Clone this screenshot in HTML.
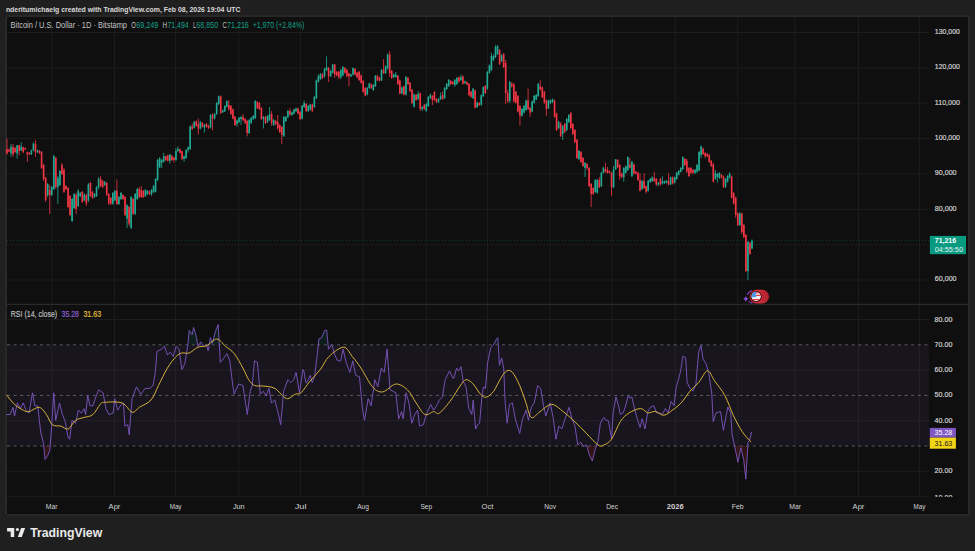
<!DOCTYPE html>
<html><head><meta charset="utf-8"><style>
html,body{margin:0;padding:0;}
body{width:975px;height:551px;background:#1f1f1f;position:relative;overflow:hidden;}
svg{position:absolute;left:0;top:0;font-family:"Liberation Sans", sans-serif;}
</style></head><body>
<svg width="975" height="551" viewBox="0 0 975 551">
<rect x="6" y="16" width="963" height="499" rx="3" fill="none" stroke="#282828" stroke-width="2.2"/>
<rect x="7" y="17" width="961" height="497" fill="#0f0f0f"/>
<line x1="51.7" y1="17" x2="51.7" y2="497" stroke="#1c1c1c" stroke-width="1"/>
<line x1="114.5" y1="17" x2="114.5" y2="497" stroke="#1c1c1c" stroke-width="1"/>
<line x1="175.6" y1="17" x2="175.6" y2="497" stroke="#1c1c1c" stroke-width="1"/>
<line x1="238.8" y1="17" x2="238.8" y2="497" stroke="#1c1c1c" stroke-width="1"/>
<line x1="300.6" y1="17" x2="300.6" y2="497" stroke="#1c1c1c" stroke-width="1"/>
<line x1="363.1" y1="17" x2="363.1" y2="497" stroke="#1c1c1c" stroke-width="1"/>
<line x1="426.3" y1="17" x2="426.3" y2="497" stroke="#1c1c1c" stroke-width="1"/>
<line x1="487.5" y1="17" x2="487.5" y2="497" stroke="#1c1c1c" stroke-width="1"/>
<line x1="550.1" y1="17" x2="550.1" y2="497" stroke="#1c1c1c" stroke-width="1"/>
<line x1="612.1" y1="17" x2="612.1" y2="497" stroke="#1c1c1c" stroke-width="1"/>
<line x1="675.3" y1="17" x2="675.3" y2="497" stroke="#1c1c1c" stroke-width="1"/>
<line x1="737.7" y1="17" x2="737.7" y2="497" stroke="#1c1c1c" stroke-width="1"/>
<line x1="795.1" y1="17" x2="795.1" y2="497" stroke="#1c1c1c" stroke-width="1"/>
<line x1="858.5" y1="17" x2="858.5" y2="497" stroke="#1c1c1c" stroke-width="1"/>
<line x1="919.4" y1="17" x2="919.4" y2="497" stroke="#1c1c1c" stroke-width="1"/>
<line x1="7" y1="280.0" x2="929" y2="280.0" stroke="#1c1c1c" stroke-width="1"/>
<line x1="7" y1="244.7" x2="929" y2="244.7" stroke="#1c1c1c" stroke-width="1"/>
<line x1="7" y1="209.3" x2="929" y2="209.3" stroke="#1c1c1c" stroke-width="1"/>
<line x1="7" y1="173.9" x2="929" y2="173.9" stroke="#1c1c1c" stroke-width="1"/>
<line x1="7" y1="138.6" x2="929" y2="138.6" stroke="#1c1c1c" stroke-width="1"/>
<line x1="7" y1="103.2" x2="929" y2="103.2" stroke="#1c1c1c" stroke-width="1"/>
<line x1="7" y1="67.9" x2="929" y2="67.9" stroke="#1c1c1c" stroke-width="1"/>
<line x1="7" y1="32.5" x2="929" y2="32.5" stroke="#1c1c1c" stroke-width="1"/>
<line x1="7" y1="319.5" x2="929" y2="319.5" stroke="#1c1c1c" stroke-width="1"/>
<line x1="7" y1="370.1" x2="929" y2="370.1" stroke="#1c1c1c" stroke-width="1"/>
<line x1="7" y1="420.7" x2="929" y2="420.7" stroke="#1c1c1c" stroke-width="1"/>
<line x1="7" y1="471.3" x2="929" y2="471.3" stroke="#1c1c1c" stroke-width="1"/>
<line x1="7" y1="496.6" x2="929" y2="496.6" stroke="#1c1c1c" stroke-width="1"/>
<rect x="7" y="344.8" width="922" height="101.2" fill="#7e57c2" fill-opacity="0.09"/>
<line x1="7" y1="344.8" x2="929" y2="344.8" stroke="#8a8a8a" stroke-opacity="0.6" stroke-width="1" stroke-dasharray="3 3.6"/>
<line x1="7" y1="395.4" x2="929" y2="395.4" stroke="#8a8a8a" stroke-opacity="0.6" stroke-width="1" stroke-dasharray="3 3.6"/>
<line x1="7" y1="446.0" x2="929" y2="446.0" stroke="#8a8a8a" stroke-opacity="0.6" stroke-width="1" stroke-dasharray="3 3.6"/>
<line x1="7" y1="304.3" x2="968" y2="304.3" stroke="#2a2a2a" stroke-width="1.2"/>
<line x1="7" y1="240.65" x2="929" y2="240.65" stroke="#089981" stroke-opacity="0.35" stroke-width="1" stroke-dasharray="1 2"/>
<path d="M11.04 144.00V156.80M17.15 145.00V158.70M21.22 142.20V151.00M31.40 149.50V155.00M33.43 142.50V151.00M37.50 149.50V153.00M47.68 183.00V197.00M51.75 186.00V196.00M53.79 155.00V190.00M57.86 176.00V204.00M59.90 170.00V186.00M72.11 198.00V222.00M74.15 193.00V209.00M78.22 189.00V207.00M80.25 192.00V197.00M84.32 193.00V201.00M88.39 183.00V202.00M94.50 193.00V198.00M96.54 186.00V197.00M98.57 177.00V189.00M104.68 181.00V186.00M112.82 192.00V205.00M114.86 190.00V201.00M118.93 196.00V205.00M120.96 192.00V200.00M127.07 204.00V228.00M131.14 196.00V229.00M135.21 193.00V215.00M137.25 188.00V200.00M145.39 189.00V197.00M147.43 190.00V195.00M151.50 189.00V195.50M153.53 185.00V193.00M155.57 178.00V192.50M157.60 159.00V181.00M159.64 157.30V168.00M161.68 159.00V168.00M163.71 153.00V162.50M169.82 154.00V163.50M175.93 148.00V161.00M177.96 146.30V152.00M184.07 155.50V161.70M186.10 149.20V159.00M188.14 146.50V152.70M190.17 125.50V150.00M194.25 121.00V128.50M200.35 120.80V129.50M204.42 124.00V132.60M210.53 114.00V128.50M214.60 113.00V119.50M216.64 102.00V115.00M218.67 95.50V105.00M222.74 109.50V113.00M224.78 105.00V112.00M226.82 100.40V107.50M236.99 119.50V126.70M239.03 117.00V123.00M241.06 116.00V125.00M249.21 119.00V134.00M251.24 117.00V124.00M253.28 115.00V120.00M255.31 100.00V119.00M263.46 116.00V128.40M267.53 115.00V123.00M269.56 107.00V121.00M273.63 119.00V126.00M283.81 116.00V137.00M285.85 116.00V122.00M287.88 110.00V118.00M291.95 111.50V116.00M293.99 109.00V114.50M296.03 107.50V112.00M302.13 105.00V119.50M304.17 100.70V108.00M308.24 105.00V112.00M310.27 104.00V110.60M314.35 96.00V108.00M316.38 79.50V99.00M318.42 74.00V82.50M320.45 73.00V80.00M324.52 68.00V77.50M326.56 56.30V71.00M330.63 70.00V77.00M332.67 64.00V73.50M340.81 69.00V79.00M342.84 66.00V76.30M350.99 73.60V77.00M353.02 67.50V75.50M367.27 87.00V95.40M369.31 82.70V89.00M373.38 84.00V91.00M375.41 75.00V87.00M381.52 69.00V81.00M385.59 65.50V74.00M387.63 53.50V69.50M393.73 73.50V78.00M395.77 72.00V77.80M401.88 86.50V94.30M405.95 76.00V95.50M414.09 93.60V107.50M418.16 91.00V100.00M422.23 106.00V111.00M426.30 103.00V112.00M428.34 96.00V107.00M430.38 93.40V99.00M438.52 98.00V103.00M440.55 92.50V100.00M444.62 87.00V99.00M446.66 83.00V90.00M448.70 79.00V87.00M454.80 79.00V87.00M456.84 77.00V85.00M460.91 74.50V81.00M464.98 80.50V84.00M473.12 88.00V99.00M477.19 101.70V108.00M481.27 94.40V105.70M483.30 86.40V97.00M487.37 71.00V89.70M489.41 64.50V73.60M491.44 52.70V71.00M493.48 54.50V61.00M495.51 45.20V58.00M497.55 45.00V55.00M501.62 54.00V62.00M509.76 81.00V103.00M521.98 108.00V116.70M524.01 105.00V113.40M526.05 99.60V111.00M532.16 100.70V112.30M534.19 95.00V103.60M536.23 94.00V100.30M538.26 83.00V97.00M548.44 99.60V109.00M550.48 99.60V104.00M552.51 98.50V103.00M558.62 121.00V129.00M562.69 125.00V140.00M566.76 118.00V131.00M568.80 114.00V123.00M578.97 150.00V160.00M585.08 162.00V177.00M595.26 179.00V193.00M597.29 179.00V194.00M601.37 172.00V187.00M603.40 166.80V173.50M613.58 165.90V188.00M615.61 159.00V170.00M623.76 167.00V181.80M625.79 165.50V173.50M627.83 156.50V171.00M631.90 161.00V177.00M642.08 180.00V190.00M648.18 180.00V191.50M650.22 178.00V183.00M652.26 176.50V182.00M658.36 182.00V186.30M662.43 176.30V184.50M664.47 180.50V184.00M666.50 180.00V183.50M670.58 176.50V185.00M674.65 176.50V183.50M676.68 172.00V180.00M678.72 170.00V175.50M680.75 167.00V172.50M682.79 156.30V170.00M695.00 169.00V174.00M697.04 164.00V173.00M699.07 151.00V171.00M701.11 145.50V158.00M715.36 170.00V180.00M717.39 173.00V182.50M719.43 172.00V179.00M725.54 178.00V188.00M727.57 175.00V182.50M729.61 172.30V178.50M739.79 212.00V226.00M747.93 241.00V280.00M752.00 239.50V249.00" stroke="#22ab94" stroke-width="0.8" fill="none"/>
<path d="M6.97 138.40V154.50M9.01 148.50V152.00M13.08 144.00V156.80M15.11 147.00V153.00M19.18 145.00V155.50M23.26 146.50V153.00M25.29 147.50V150.00M27.33 151.50V161.90M29.36 152.00V155.00M35.47 140.30V156.80M39.54 150.00V154.00M41.58 151.00V169.00M43.61 164.00V181.00M45.65 177.00V202.00M49.72 185.00V214.00M55.82 157.00V189.00M61.93 163.00V175.00M63.97 168.00V193.00M66.00 185.00V190.00M68.04 187.00V208.00M70.07 195.00V216.00M76.18 193.00V214.00M82.29 191.00V203.00M86.36 194.00V206.00M90.43 182.00V197.00M92.47 191.00V199.00M100.61 176.00V187.00M102.64 180.00V188.00M106.71 182.00V196.00M108.75 193.00V205.00M110.79 197.00V205.00M116.89 179.40V205.00M123.00 194.00V200.00M125.04 196.00V216.00M129.11 206.00V226.00M133.18 198.00V215.00M139.28 187.00V198.00M141.32 186.00V198.00M143.36 190.00V198.00M149.46 190.50V195.00M165.75 155.50V161.00M167.78 154.50V161.50M171.85 155.00V161.00M173.89 157.00V162.60M180.00 148.50V153.50M182.03 150.50V160.00M192.21 123.60V130.00M196.28 120.50V126.50M198.32 118.60V134.50M202.39 122.00V127.50M206.46 123.00V127.50M208.49 125.00V129.00M212.57 113.00V130.40M220.71 95.50V114.00M228.85 100.00V110.50M230.89 105.00V115.00M232.92 108.50V119.50M234.96 116.00V126.00M243.10 114.00V121.00M245.14 118.00V124.00M247.17 120.00V136.40M257.35 101.00V109.00M259.38 102.00V110.00M261.42 107.00V120.00M265.49 116.00V124.00M271.60 111.00V126.00M275.67 120.00V125.00M277.71 115.00V130.00M279.74 124.00V133.00M281.78 126.00V143.90M289.92 108.40V115.50M298.06 107.50V114.50M300.10 111.00V120.00M306.20 103.00V112.00M312.31 104.00V112.00M322.49 73.00V79.00M328.60 67.00V82.00M334.70 64.00V78.00M336.74 71.00V76.30M338.77 71.00V79.00M344.88 67.00V73.60M346.92 69.00V77.00M348.95 72.70V86.30M355.06 68.00V75.50M357.09 72.00V78.00M359.13 71.00V81.00M361.16 74.50V83.60M363.20 80.00V92.60M365.24 87.00V96.30M371.34 83.60V89.00M377.45 75.00V81.00M379.49 77.00V81.50M383.56 59.20V74.00M389.66 50.90V77.00M391.70 70.00V79.00M397.81 75.00V85.00M399.84 79.50V94.30M403.91 85.50V95.50M407.98 77.00V85.00M410.02 82.00V92.00M412.05 89.00V104.00M416.13 94.00V101.00M420.20 92.50V111.00M424.27 104.00V110.00M432.41 95.00V105.00M434.45 91.00V101.00M436.48 98.00V103.00M442.59 91.50V100.00M450.73 80.00V85.00M452.77 81.00V85.00M458.87 76.50V82.50M462.94 75.50V84.50M467.02 81.50V85.30M469.05 83.00V96.20M471.09 90.80V97.70M475.16 89.70V108.50M479.23 102.00V106.00M485.34 85.00V94.00M499.59 49.00V65.00M503.66 53.00V68.00M505.69 60.00V103.90M507.73 90.00V103.00M511.80 82.00V88.00M513.83 83.00V102.50M515.87 91.00V103.60M517.91 95.00V112.30M519.94 105.00V125.50M528.08 88.50V110.00M530.12 107.00V117.00M540.30 80.30V90.50M542.33 86.50V98.00M544.37 91.00V103.60M546.40 99.60V115.80M554.55 99.60V117.70M556.58 112.70V131.00M560.65 122.00V137.00M564.72 123.00V133.00M570.83 112.00V129.00M572.87 123.00V135.00M574.90 129.00V143.00M576.94 139.00V159.00M581.01 151.00V163.00M583.05 157.00V167.00M587.12 163.00V170.00M589.15 167.00V187.00M591.19 183.00V207.00M593.22 187.00V195.00M599.33 177.20V188.00M605.44 162.70V172.50M607.47 166.80V173.50M609.51 170.50V173.50M611.54 172.00V195.80M617.65 159.00V168.00M619.69 164.00V180.00M621.72 172.70V178.00M629.86 158.20V168.50M633.94 163.50V174.50M635.97 171.00V174.50M638.01 172.00V181.00M640.04 173.60V191.50M644.11 173.20V189.00M646.15 185.50V193.50M654.29 171.80V182.00M656.33 178.00V186.00M660.40 178.00V185.50M668.54 173.20V185.50M672.61 176.50V184.50M684.83 158.00V166.00M686.86 159.00V173.00M688.90 167.00V177.00M690.93 167.00V174.00M692.97 169.00V174.00M703.15 147.50V155.00M705.18 152.00V158.00M707.22 153.00V157.00M709.25 154.00V163.00M711.29 160.00V167.00M713.32 163.00V182.50M721.47 174.00V178.50M723.50 175.50V188.00M731.64 175.50V198.50M733.68 192.00V204.50M735.72 196.50V218.00M737.75 212.50V226.00M741.82 212.50V234.00M743.86 224.00V238.00M745.89 234.00V272.00M749.96 242.00V255.00" stroke="#f23645" stroke-width="0.8" fill="none"/>
<path d="M10.24 146.60h1.6v7.00h-1.6zM16.35 145.30h1.6v8.30h-1.6zM20.42 146.60h1.6v3.80h-1.6zM30.60 150.40h1.6v3.80h-1.6zM32.63 143.40h1.6v7.00h-1.6zM36.70 150.40h1.6v1.90h-1.6zM46.88 184.00h1.6v11.00h-1.6zM50.95 187.00h1.6v8.00h-1.6zM52.99 156.00h1.6v33.00h-1.6zM57.06 178.00h1.6v9.00h-1.6zM59.10 171.00h1.6v14.00h-1.6zM71.31 199.00h1.6v22.00h-1.6zM73.35 194.00h1.6v14.00h-1.6zM77.42 191.00h1.6v15.00h-1.6zM79.45 193.00h1.6v3.00h-1.6zM83.52 194.80h1.6v5.80h-1.6zM87.59 184.60h1.6v16.00h-1.6zM93.70 194.00h1.6v3.00h-1.6zM95.74 187.50h1.6v8.50h-1.6zM97.77 178.80h1.6v8.70h-1.6zM103.88 182.00h1.6v3.00h-1.6zM112.02 193.00h1.6v10.50h-1.6zM114.06 190.80h1.6v9.80h-1.6zM118.13 197.00h1.6v7.00h-1.6zM120.16 193.00h1.6v6.00h-1.6zM126.27 205.50h1.6v13.10h-1.6zM130.34 197.00h1.6v31.00h-1.6zM134.41 194.00h1.6v19.70h-1.6zM136.45 189.00h1.6v10.00h-1.6zM144.59 190.00h1.6v6.00h-1.6zM146.63 191.00h1.6v3.00h-1.6zM150.70 190.00h1.6v4.50h-1.6zM152.73 186.00h1.6v6.00h-1.6zM154.77 179.00h1.6v12.80h-1.6zM156.80 160.00h1.6v20.00h-1.6zM158.84 158.20h1.6v9.10h-1.6zM160.88 160.00h1.6v2.70h-1.6zM162.91 156.30h1.6v5.40h-1.6zM169.02 154.50h1.6v6.30h-1.6zM175.13 150.90h1.6v9.10h-1.6zM177.16 149.00h1.6v1.90h-1.6zM183.27 156.30h1.6v2.70h-1.6zM185.30 150.00h1.6v8.00h-1.6zM187.34 147.20h1.6v2.80h-1.6zM189.37 126.40h1.6v22.60h-1.6zM193.45 121.80h1.6v5.90h-1.6zM199.55 122.20h1.6v6.40h-1.6zM203.62 125.00h1.6v2.60h-1.6zM209.73 115.00h1.6v12.60h-1.6zM213.80 114.00h1.6v4.60h-1.6zM215.84 103.00h1.6v11.00h-1.6zM217.87 96.30h1.6v7.70h-1.6zM221.94 110.40h1.6v1.80h-1.6zM223.98 106.00h1.6v5.30h-1.6zM226.02 101.30h1.6v5.50h-1.6zM236.19 120.40h1.6v3.60h-1.6zM238.23 117.80h1.6v4.20h-1.6zM240.26 117.00h1.6v2.00h-1.6zM248.41 120.00h1.6v13.00h-1.6zM250.44 118.00h1.6v5.00h-1.6zM252.48 116.00h1.6v3.00h-1.6zM254.51 101.00h1.6v17.00h-1.6zM262.66 117.00h1.6v2.00h-1.6zM266.73 116.00h1.6v6.00h-1.6zM268.76 114.00h1.6v6.00h-1.6zM272.83 120.00h1.6v5.00h-1.6zM283.01 117.00h1.6v19.00h-1.6zM285.05 117.00h1.6v4.00h-1.6zM287.08 111.00h1.6v6.30h-1.6zM291.15 112.20h1.6v2.50h-1.6zM293.19 109.60h1.6v3.90h-1.6zM295.23 108.40h1.6v2.60h-1.6zM301.33 105.80h1.6v12.70h-1.6zM303.37 103.00h1.6v4.00h-1.6zM307.44 105.80h1.6v5.20h-1.6zM309.47 104.60h1.6v5.00h-1.6zM313.55 97.00h1.6v10.00h-1.6zM315.58 80.40h1.6v17.60h-1.6zM317.62 76.00h1.6v5.70h-1.6zM319.65 74.50h1.6v4.50h-1.6zM323.72 69.00h1.6v7.60h-1.6zM325.76 67.00h1.6v3.20h-1.6zM329.83 71.00h1.6v5.30h-1.6zM331.87 64.50h1.6v8.20h-1.6zM340.01 70.00h1.6v7.20h-1.6zM342.04 67.00h1.6v8.40h-1.6zM350.19 74.50h1.6v1.80h-1.6zM352.22 68.00h1.6v6.50h-1.6zM366.47 88.00h1.6v6.50h-1.6zM368.51 83.60h1.6v4.40h-1.6zM372.58 85.00h1.6v5.00h-1.6zM374.61 75.70h1.6v10.60h-1.6zM380.72 69.80h1.6v10.60h-1.6zM384.79 66.30h1.6v7.00h-1.6zM386.83 54.40h1.6v14.20h-1.6zM392.93 74.50h1.6v2.50h-1.6zM394.97 74.50h1.6v2.40h-1.6zM401.08 87.50h1.6v5.90h-1.6zM405.15 77.00h1.6v17.60h-1.6zM413.29 94.60h1.6v11.80h-1.6zM417.36 94.00h1.6v5.00h-1.6zM421.43 107.00h1.6v2.00h-1.6zM425.50 104.00h1.6v7.00h-1.6zM427.54 97.00h1.6v9.00h-1.6zM429.58 95.00h1.6v3.00h-1.6zM437.72 99.00h1.6v3.00h-1.6zM439.75 96.00h1.6v3.00h-1.6zM443.82 88.00h1.6v10.00h-1.6zM445.86 84.00h1.6v5.00h-1.6zM447.90 80.00h1.6v6.00h-1.6zM454.00 80.00h1.6v5.00h-1.6zM456.04 78.00h1.6v6.00h-1.6zM460.11 77.20h1.6v2.80h-1.6zM464.18 81.50h1.6v1.50h-1.6zM472.32 88.80h1.6v9.40h-1.6zM476.39 102.60h1.6v4.40h-1.6zM480.47 95.30h1.6v9.50h-1.6zM482.50 87.30h1.6v8.70h-1.6zM486.57 72.00h1.6v16.80h-1.6zM488.61 65.40h1.6v7.30h-1.6zM490.64 56.00h1.6v14.00h-1.6zM492.68 56.00h1.6v4.00h-1.6zM494.71 47.00h1.6v10.00h-1.6zM496.75 46.00h1.6v8.00h-1.6zM500.82 55.50h1.6v5.50h-1.6zM508.96 82.00h1.6v19.00h-1.6zM521.18 109.00h1.6v6.80h-1.6zM523.21 106.00h1.6v6.50h-1.6zM525.25 100.50h1.6v9.50h-1.6zM531.36 101.60h1.6v9.80h-1.6zM533.39 96.00h1.6v6.70h-1.6zM535.43 95.00h1.6v4.40h-1.6zM537.46 84.00h1.6v12.00h-1.6zM547.64 100.50h1.6v7.50h-1.6zM549.68 100.50h1.6v2.50h-1.6zM551.71 99.40h1.6v2.60h-1.6zM557.82 122.00h1.6v6.00h-1.6zM561.89 126.00h1.6v8.00h-1.6zM565.96 119.00h1.6v11.00h-1.6zM568.00 115.00h1.6v7.00h-1.6zM578.17 151.00h1.6v8.00h-1.6zM584.28 163.00h1.6v5.00h-1.6zM594.46 180.00h1.6v12.00h-1.6zM596.49 180.00h1.6v12.60h-1.6zM600.57 172.70h1.6v13.60h-1.6zM602.60 167.70h1.6v5.00h-1.6zM612.78 169.50h1.6v17.70h-1.6zM614.81 159.50h1.6v10.00h-1.6zM622.96 168.00h1.6v9.20h-1.6zM624.99 166.30h1.6v6.40h-1.6zM627.03 157.00h1.6v13.00h-1.6zM631.10 161.80h1.6v14.50h-1.6zM641.28 180.90h1.6v8.10h-1.6zM647.38 180.90h1.6v9.90h-1.6zM649.42 179.00h1.6v3.00h-1.6zM651.46 177.20h1.6v3.70h-1.6zM657.56 182.70h1.6v1.80h-1.6zM661.63 180.90h1.6v2.70h-1.6zM663.67 181.30h1.6v1.70h-1.6zM665.70 181.00h1.6v1.70h-1.6zM669.78 177.20h1.6v7.30h-1.6zM673.85 177.20h1.6v5.50h-1.6zM675.88 172.70h1.6v6.30h-1.6zM677.92 170.90h1.6v3.60h-1.6zM679.95 168.00h1.6v3.80h-1.6zM681.99 157.30h1.6v11.70h-1.6zM694.20 170.00h1.6v2.70h-1.6zM696.24 165.00h1.6v6.60h-1.6zM698.27 152.00h1.6v18.50h-1.6zM700.31 146.50h1.6v8.80h-1.6zM714.56 173.00h1.6v5.80h-1.6zM716.59 174.00h1.6v3.00h-1.6zM718.63 173.00h1.6v5.00h-1.6zM724.74 178.80h1.6v8.00h-1.6zM726.77 176.00h1.6v5.70h-1.6zM728.81 173.80h1.6v3.60h-1.6zM738.99 213.60h1.6v11.40h-1.6zM747.13 242.00h1.6v29.00h-1.6zM751.20 240.65h1.6v7.95h-1.6z" fill="#22ab94"/>
<path d="M6.17 149.00h1.6v4.60h-1.6zM8.21 149.80h1.6v1.70h-1.6zM12.28 147.20h1.6v7.00h-1.6zM14.31 148.00h1.6v4.00h-1.6zM18.38 145.30h1.6v5.70h-1.6zM22.46 147.20h1.6v5.10h-1.6zM24.49 148.00h1.6v1.50h-1.6zM26.53 152.30h1.6v1.90h-1.6zM28.56 152.80h1.6v1.40h-1.6zM34.67 144.00h1.6v8.30h-1.6zM38.74 151.00h1.6v2.00h-1.6zM40.78 152.00h1.6v16.00h-1.6zM42.81 165.00h1.6v14.00h-1.6zM44.85 178.00h1.6v22.00h-1.6zM48.92 190.00h1.6v5.00h-1.6zM55.02 158.00h1.6v29.00h-1.6zM61.13 165.00h1.6v9.00h-1.6zM63.17 170.00h1.6v22.00h-1.6zM65.20 186.00h1.6v3.00h-1.6zM67.24 188.00h1.6v19.00h-1.6zM69.27 196.00h1.6v19.00h-1.6zM75.38 195.00h1.6v14.00h-1.6zM81.49 192.00h1.6v10.00h-1.6zM85.56 195.00h1.6v8.50h-1.6zM89.63 183.00h1.6v13.00h-1.6zM91.67 192.00h1.6v5.70h-1.6zM99.81 178.80h1.6v7.20h-1.6zM101.84 181.00h1.6v6.00h-1.6zM105.91 183.00h1.6v11.80h-1.6zM107.95 194.00h1.6v9.50h-1.6zM109.99 198.00h1.6v5.50h-1.6zM116.09 190.80h1.6v13.20h-1.6zM122.20 195.00h1.6v4.00h-1.6zM124.24 197.00h1.6v18.00h-1.6zM128.31 207.00h1.6v16.50h-1.6zM132.38 199.00h1.6v14.70h-1.6zM138.48 189.00h1.6v8.00h-1.6zM140.52 190.00h1.6v7.00h-1.6zM142.56 191.00h1.6v6.00h-1.6zM148.66 191.40h1.6v2.60h-1.6zM164.95 156.30h1.6v3.70h-1.6zM166.98 155.40h1.6v5.40h-1.6zM171.05 155.80h1.6v4.20h-1.6zM173.09 157.50h1.6v2.50h-1.6zM179.20 149.50h1.6v3.20h-1.6zM181.23 151.30h1.6v7.70h-1.6zM191.41 126.40h1.6v2.60h-1.6zM195.48 121.30h1.6v4.50h-1.6zM197.52 124.00h1.6v4.60h-1.6zM201.59 123.00h1.6v3.70h-1.6zM205.66 124.00h1.6v2.70h-1.6zM207.69 125.80h1.6v2.30h-1.6zM211.77 115.00h1.6v3.60h-1.6zM219.91 96.30h1.6v16.70h-1.6zM228.05 105.00h1.6v4.50h-1.6zM230.09 106.00h1.6v8.00h-1.6zM232.12 109.50h1.6v9.10h-1.6zM234.16 116.80h1.6v8.20h-1.6zM242.30 117.00h1.6v3.00h-1.6zM244.34 119.00h1.6v4.00h-1.6zM246.37 121.00h1.6v12.00h-1.6zM256.55 102.00h1.6v6.00h-1.6zM258.58 103.00h1.6v6.00h-1.6zM260.62 108.00h1.6v11.00h-1.6zM264.69 117.00h1.6v6.00h-1.6zM270.80 114.00h1.6v9.00h-1.6zM274.87 121.00h1.6v3.00h-1.6zM276.91 122.00h1.6v6.00h-1.6zM278.94 125.00h1.6v7.00h-1.6zM280.98 127.00h1.6v8.00h-1.6zM289.12 111.00h1.6v3.70h-1.6zM297.26 108.40h1.6v5.10h-1.6zM299.30 112.00h1.6v7.00h-1.6zM305.40 104.00h1.6v7.00h-1.6zM311.51 104.60h1.6v6.40h-1.6zM321.69 74.00h1.6v3.90h-1.6zM327.80 68.00h1.6v8.30h-1.6zM333.90 64.50h1.6v10.00h-1.6zM335.94 71.80h1.6v3.60h-1.6zM337.97 71.80h1.6v5.40h-1.6zM344.08 68.00h1.6v4.70h-1.6zM346.12 70.00h1.6v6.30h-1.6zM348.15 73.60h1.6v2.70h-1.6zM354.26 69.00h1.6v5.50h-1.6zM356.29 72.70h1.6v4.50h-1.6zM358.33 71.80h1.6v8.20h-1.6zM360.36 75.40h1.6v7.30h-1.6zM362.40 80.90h1.6v10.80h-1.6zM364.44 88.00h1.6v7.40h-1.6zM370.54 84.50h1.6v3.50h-1.6zM376.65 75.70h1.6v4.70h-1.6zM378.69 77.80h1.6v2.60h-1.6zM382.76 69.80h1.6v3.50h-1.6zM388.86 54.40h1.6v18.90h-1.6zM390.90 71.00h1.6v7.00h-1.6zM397.01 75.70h1.6v8.30h-1.6zM399.04 80.40h1.6v13.00h-1.6zM403.11 86.30h1.6v8.30h-1.6zM407.18 78.00h1.6v6.00h-1.6zM409.22 82.80h1.6v8.20h-1.6zM411.25 90.00h1.6v12.90h-1.6zM415.33 95.00h1.6v5.00h-1.6zM419.40 93.40h1.6v15.60h-1.6zM423.47 105.00h1.6v4.00h-1.6zM431.61 96.00h1.6v4.00h-1.6zM433.65 92.00h1.6v8.00h-1.6zM435.68 99.00h1.6v3.00h-1.6zM441.79 95.00h1.6v4.00h-1.6zM449.93 81.00h1.6v3.00h-1.6zM451.97 82.00h1.6v2.00h-1.6zM458.07 77.20h1.6v4.50h-1.6zM462.14 76.50h1.6v7.20h-1.6zM466.22 82.30h1.6v2.10h-1.6zM468.25 84.00h1.6v11.30h-1.6zM470.29 91.70h1.6v5.10h-1.6zM474.36 90.60h1.6v17.10h-1.6zM478.43 103.00h1.6v2.00h-1.6zM484.54 85.90h1.6v7.10h-1.6zM498.79 50.00h1.6v14.00h-1.6zM502.86 54.00h1.6v13.00h-1.6zM504.89 63.00h1.6v30.00h-1.6zM506.93 93.00h1.6v8.00h-1.6zM511.00 84.00h1.6v2.00h-1.6zM513.03 84.40h1.6v17.20h-1.6zM515.07 91.80h1.6v10.90h-1.6zM517.11 96.00h1.6v15.40h-1.6zM519.14 106.00h1.6v9.80h-1.6zM527.28 100.50h1.6v8.50h-1.6zM529.32 108.00h1.6v4.50h-1.6zM539.50 86.30h1.6v3.30h-1.6zM541.53 87.40h1.6v9.80h-1.6zM543.57 91.80h1.6v10.90h-1.6zM545.60 100.50h1.6v8.50h-1.6zM553.75 100.50h1.6v16.30h-1.6zM555.78 113.60h1.6v16.40h-1.6zM559.85 124.00h1.6v12.00h-1.6zM563.92 124.00h1.6v8.00h-1.6zM570.03 113.00h1.6v15.00h-1.6zM572.07 124.00h1.6v10.00h-1.6zM574.10 130.00h1.6v12.00h-1.6zM576.14 140.00h1.6v18.00h-1.6zM580.21 152.00h1.6v10.00h-1.6zM582.25 158.00h1.6v8.00h-1.6zM586.32 164.00h1.6v4.00h-1.6zM588.35 168.00h1.6v18.00h-1.6zM590.39 184.00h1.6v10.00h-1.6zM592.42 188.00h1.6v6.00h-1.6zM598.53 180.00h1.6v7.20h-1.6zM604.64 169.00h1.6v2.80h-1.6zM606.67 170.00h1.6v2.70h-1.6zM608.71 171.30h1.6v1.40h-1.6zM610.74 172.70h1.6v14.50h-1.6zM616.85 160.00h1.6v7.20h-1.6zM618.89 165.00h1.6v11.30h-1.6zM620.92 173.60h1.6v3.60h-1.6zM629.06 164.50h1.6v3.20h-1.6zM633.14 164.50h1.6v9.10h-1.6zM635.17 171.80h1.6v1.80h-1.6zM637.21 172.70h1.6v7.30h-1.6zM639.24 180.00h1.6v10.80h-1.6zM643.31 180.90h1.6v7.10h-1.6zM645.35 186.30h1.6v5.40h-1.6zM653.49 178.00h1.6v2.90h-1.6zM655.53 179.00h1.6v5.50h-1.6zM659.60 179.00h1.6v5.50h-1.6zM667.74 180.90h1.6v3.60h-1.6zM671.81 177.20h1.6v6.40h-1.6zM684.03 159.00h1.6v6.00h-1.6zM686.06 160.70h1.6v10.90h-1.6zM688.10 168.00h1.6v8.00h-1.6zM690.13 168.00h1.6v4.70h-1.6zM692.17 170.00h1.6v2.70h-1.6zM702.35 148.70h1.6v5.30h-1.6zM704.38 153.00h1.6v3.30h-1.6zM706.42 154.00h1.6v2.30h-1.6zM708.45 155.30h1.6v6.50h-1.6zM710.49 160.70h1.6v5.30h-1.6zM712.52 164.30h1.6v17.40h-1.6zM720.67 175.00h1.6v2.40h-1.6zM722.70 176.70h1.6v10.10h-1.6zM730.84 176.70h1.6v21.00h-1.6zM732.88 193.00h1.6v10.50h-1.6zM734.92 197.70h1.6v17.30h-1.6zM736.95 213.60h1.6v11.40h-1.6zM741.02 213.60h1.6v18.40h-1.6zM743.06 225.00h1.6v12.00h-1.6zM745.09 235.00h1.6v36.00h-1.6zM749.16 243.00h1.6v11.00h-1.6z" fill="#f23645"/>
<clipPath id="ob"><rect x="0" y="0" width="975" height="344.80"/></clipPath>
<clipPath id="os"><rect x="0" y="446.00" width="975" height="100"/></clipPath>
<polygon points="6.4,344.8 6.4,414.5 10.2,414.5 13.1,407.3 14.5,416.0 17.4,402.9 20.3,408.7 23.2,402.9 26.1,410.2 29.0,413.1 32.5,392.8 34.8,405.8 37.7,405.8 40.7,432.0 43.6,443.6 45.0,459.5 47.9,455.2 49.9,449.4 51.7,426.1 53.7,392.8 55.7,420.3 59.5,402.9 62.4,414.5 65.3,421.8 68.2,437.8 69.7,439.2 72.0,420.3 75.5,423.2 78.4,410.2 81.3,413.1 84.2,408.7 85.7,414.5 87.7,395.7 90.0,405.8 92.9,405.8 95.8,397.1 98.7,389.8 103.1,392.8 106.0,408.7 108.9,414.5 113.2,413.1 114.7,398.6 117.6,410.2 120.5,405.8 123.4,402.9 124.9,426.1 127.8,424.7 129.2,434.9 132.1,398.6 136.5,386.9 140.8,394.2 145.2,388.4 149.8,388.4 153.1,385.5 155.3,372.4 157.0,351.4 161.6,349.2 164.5,346.3 167.4,355.0 170.3,352.1 173.2,356.5 176.1,346.3 179.0,349.2 181.9,369.5 184.8,363.7 187.7,346.3 189.2,330.3 192.1,334.7 193.6,327.4 196.5,337.6 197.9,346.3 200.8,341.9 203.7,346.3 206.6,344.8 208.1,350.7 210.4,337.6 212.4,343.4 215.3,331.8 218.2,324.5 220.3,362.3 224.0,357.9 226.9,353.6 229.8,360.8 232.8,385.5 234.2,394.2 238.6,384.0 242.9,385.5 247.3,414.5 250.2,391.3 252.2,385.5 254.5,360.8 257.4,362.3 260.3,394.2 263.2,391.3 266.1,395.7 269.0,388.4 271.4,402.9 274.9,400.0 277.8,411.6 280.7,424.7 283.6,391.3 287.9,379.7 290.8,382.6 293.7,379.7 296.1,372.4 299.5,392.8 302.9,369.5 303.9,371.0 305.8,382.6 306.8,382.6 310.2,375.3 312.2,382.6 314.5,376.8 317.4,353.6 318.9,339.0 321.8,337.6 324.7,330.3 326.7,330.3 328.5,349.2 331.9,344.8 334.8,355.0 337.7,360.8 340.7,360.8 343.0,349.2 346.5,363.7 349.9,372.4 352.8,360.8 355.7,375.3 359.5,376.8 362.4,408.7 364.5,420.3 368.2,398.6 371.1,405.8 374.9,379.7 377.8,386.9 381.3,368.1 384.2,372.4 387.1,349.2 390.0,389.8 395.8,392.8 398.7,418.9 401.6,411.6 403.1,418.9 406.0,392.8 408.9,402.9 411.8,423.2 414.7,414.5 417.6,410.2 419.6,426.1 423.4,424.7 426.3,414.5 430.7,404.4 433.6,410.2 436.5,405.8 439.4,400.0 442.3,397.1 445.2,379.7 449.5,371.0 452.9,378.2 453.9,378.2 456.6,368.1 458.7,371.0 461.0,366.6 463.1,381.1 466.0,386.9 468.9,408.7 471.8,414.5 473.2,400.0 475.6,429.0 477.6,424.7 479.6,423.2 481.9,397.1 483.4,386.9 485.4,388.4 487.7,362.3 490.7,347.7 493.6,344.8 496.5,339.0 497.9,337.6 499.4,365.2 501.7,357.9 503.7,368.1 505.2,402.9 507.2,423.2 509.5,404.4 512.4,402.9 515.3,418.9 519.7,433.4 522.6,418.9 526.1,410.2 528.4,420.3 531.3,407.3 534.2,402.9 537.7,385.5 540.6,388.4 543.5,405.8 545.8,416.0 550.2,402.9 553.1,417.4 556.0,439.2 558.9,426.1 561.8,429.0 564.1,421.8 567.0,413.1 569.0,407.3 572.0,418.9 574.9,426.1 577.8,445.0 580.7,442.1 583.6,446.5 586.5,445.0 589.4,455.2 592.3,461.0 595.2,449.4 598.1,440.7 600.4,423.2 602.9,418.7 603.9,417.4 605.8,420.2 608.5,421.0 611.6,439.0 613.1,412.9 616.0,396.9 618.9,407.1 620.3,414.4 623.2,412.9 626.1,404.2 628.2,395.5 629.9,398.4 631.9,396.9 634.8,410.0 637.7,420.2 640.1,427.4 642.1,418.7 645.0,428.9 647.9,411.5 650.8,407.1 653.7,405.7 656.6,412.9 659.5,412.9 662.4,414.4 665.3,408.6 668.2,412.9 671.1,401.3 674.0,405.7 676.1,388.2 678.4,379.5 680.7,370.8 682.8,356.3 685.7,357.7 687.1,382.4 690.0,388.2 692.9,391.1 695.8,385.3 698.7,351.9 701.0,345.6 703.1,359.2 706.0,363.6 708.9,373.7 711.8,394.0 713.2,421.6 716.1,412.9 720.5,411.5 723.4,430.3 727.8,407.1 730.7,412.9 732.1,434.7 735.0,447.8 737.9,462.3 740.8,447.8 743.7,459.4 745.8,479.1 748.1,442.0 749.5,440.5 751.6,431.8 751.6,344.8" fill="#089981" fill-opacity="0.12" clip-path="url(#ob)"/>
<polygon points="6.4,446.0 6.4,414.5 10.2,414.5 13.1,407.3 14.5,416.0 17.4,402.9 20.3,408.7 23.2,402.9 26.1,410.2 29.0,413.1 32.5,392.8 34.8,405.8 37.7,405.8 40.7,432.0 43.6,443.6 45.0,459.5 47.9,455.2 49.9,449.4 51.7,426.1 53.7,392.8 55.7,420.3 59.5,402.9 62.4,414.5 65.3,421.8 68.2,437.8 69.7,439.2 72.0,420.3 75.5,423.2 78.4,410.2 81.3,413.1 84.2,408.7 85.7,414.5 87.7,395.7 90.0,405.8 92.9,405.8 95.8,397.1 98.7,389.8 103.1,392.8 106.0,408.7 108.9,414.5 113.2,413.1 114.7,398.6 117.6,410.2 120.5,405.8 123.4,402.9 124.9,426.1 127.8,424.7 129.2,434.9 132.1,398.6 136.5,386.9 140.8,394.2 145.2,388.4 149.8,388.4 153.1,385.5 155.3,372.4 157.0,351.4 161.6,349.2 164.5,346.3 167.4,355.0 170.3,352.1 173.2,356.5 176.1,346.3 179.0,349.2 181.9,369.5 184.8,363.7 187.7,346.3 189.2,330.3 192.1,334.7 193.6,327.4 196.5,337.6 197.9,346.3 200.8,341.9 203.7,346.3 206.6,344.8 208.1,350.7 210.4,337.6 212.4,343.4 215.3,331.8 218.2,324.5 220.3,362.3 224.0,357.9 226.9,353.6 229.8,360.8 232.8,385.5 234.2,394.2 238.6,384.0 242.9,385.5 247.3,414.5 250.2,391.3 252.2,385.5 254.5,360.8 257.4,362.3 260.3,394.2 263.2,391.3 266.1,395.7 269.0,388.4 271.4,402.9 274.9,400.0 277.8,411.6 280.7,424.7 283.6,391.3 287.9,379.7 290.8,382.6 293.7,379.7 296.1,372.4 299.5,392.8 302.9,369.5 303.9,371.0 305.8,382.6 306.8,382.6 310.2,375.3 312.2,382.6 314.5,376.8 317.4,353.6 318.9,339.0 321.8,337.6 324.7,330.3 326.7,330.3 328.5,349.2 331.9,344.8 334.8,355.0 337.7,360.8 340.7,360.8 343.0,349.2 346.5,363.7 349.9,372.4 352.8,360.8 355.7,375.3 359.5,376.8 362.4,408.7 364.5,420.3 368.2,398.6 371.1,405.8 374.9,379.7 377.8,386.9 381.3,368.1 384.2,372.4 387.1,349.2 390.0,389.8 395.8,392.8 398.7,418.9 401.6,411.6 403.1,418.9 406.0,392.8 408.9,402.9 411.8,423.2 414.7,414.5 417.6,410.2 419.6,426.1 423.4,424.7 426.3,414.5 430.7,404.4 433.6,410.2 436.5,405.8 439.4,400.0 442.3,397.1 445.2,379.7 449.5,371.0 452.9,378.2 453.9,378.2 456.6,368.1 458.7,371.0 461.0,366.6 463.1,381.1 466.0,386.9 468.9,408.7 471.8,414.5 473.2,400.0 475.6,429.0 477.6,424.7 479.6,423.2 481.9,397.1 483.4,386.9 485.4,388.4 487.7,362.3 490.7,347.7 493.6,344.8 496.5,339.0 497.9,337.6 499.4,365.2 501.7,357.9 503.7,368.1 505.2,402.9 507.2,423.2 509.5,404.4 512.4,402.9 515.3,418.9 519.7,433.4 522.6,418.9 526.1,410.2 528.4,420.3 531.3,407.3 534.2,402.9 537.7,385.5 540.6,388.4 543.5,405.8 545.8,416.0 550.2,402.9 553.1,417.4 556.0,439.2 558.9,426.1 561.8,429.0 564.1,421.8 567.0,413.1 569.0,407.3 572.0,418.9 574.9,426.1 577.8,445.0 580.7,442.1 583.6,446.5 586.5,445.0 589.4,455.2 592.3,461.0 595.2,449.4 598.1,440.7 600.4,423.2 602.9,418.7 603.9,417.4 605.8,420.2 608.5,421.0 611.6,439.0 613.1,412.9 616.0,396.9 618.9,407.1 620.3,414.4 623.2,412.9 626.1,404.2 628.2,395.5 629.9,398.4 631.9,396.9 634.8,410.0 637.7,420.2 640.1,427.4 642.1,418.7 645.0,428.9 647.9,411.5 650.8,407.1 653.7,405.7 656.6,412.9 659.5,412.9 662.4,414.4 665.3,408.6 668.2,412.9 671.1,401.3 674.0,405.7 676.1,388.2 678.4,379.5 680.7,370.8 682.8,356.3 685.7,357.7 687.1,382.4 690.0,388.2 692.9,391.1 695.8,385.3 698.7,351.9 701.0,345.6 703.1,359.2 706.0,363.6 708.9,373.7 711.8,394.0 713.2,421.6 716.1,412.9 720.5,411.5 723.4,430.3 727.8,407.1 730.7,412.9 732.1,434.7 735.0,447.8 737.9,462.3 740.8,447.8 743.7,459.4 745.8,479.1 748.1,442.0 749.5,440.5 751.6,431.8 751.6,446.0" fill="#f23645" fill-opacity="0.15" clip-path="url(#os)"/>
<polyline points="6.4,414.5 10.2,414.5 13.1,407.3 14.5,416.0 17.4,402.9 20.3,408.7 23.2,402.9 26.1,410.2 29.0,413.1 32.5,392.8 34.8,405.8 37.7,405.8 40.7,432.0 43.6,443.6 45.0,459.5 47.9,455.2 49.9,449.4 51.7,426.1 53.7,392.8 55.7,420.3 59.5,402.9 62.4,414.5 65.3,421.8 68.2,437.8 69.7,439.2 72.0,420.3 75.5,423.2 78.4,410.2 81.3,413.1 84.2,408.7 85.7,414.5 87.7,395.7 90.0,405.8 92.9,405.8 95.8,397.1 98.7,389.8 103.1,392.8 106.0,408.7 108.9,414.5 113.2,413.1 114.7,398.6 117.6,410.2 120.5,405.8 123.4,402.9 124.9,426.1 127.8,424.7 129.2,434.9 132.1,398.6 136.5,386.9 140.8,394.2 145.2,388.4 149.8,388.4 153.1,385.5 155.3,372.4 157.0,351.4 161.6,349.2 164.5,346.3 167.4,355.0 170.3,352.1 173.2,356.5 176.1,346.3 179.0,349.2 181.9,369.5 184.8,363.7 187.7,346.3 189.2,330.3 192.1,334.7 193.6,327.4 196.5,337.6 197.9,346.3 200.8,341.9 203.7,346.3 206.6,344.8 208.1,350.7 210.4,337.6 212.4,343.4 215.3,331.8 218.2,324.5 220.3,362.3 224.0,357.9 226.9,353.6 229.8,360.8 232.8,385.5 234.2,394.2 238.6,384.0 242.9,385.5 247.3,414.5 250.2,391.3 252.2,385.5 254.5,360.8 257.4,362.3 260.3,394.2 263.2,391.3 266.1,395.7 269.0,388.4 271.4,402.9 274.9,400.0 277.8,411.6 280.7,424.7 283.6,391.3 287.9,379.7 290.8,382.6 293.7,379.7 296.1,372.4 299.5,392.8 302.9,369.5 303.9,371.0 305.8,382.6 306.8,382.6 310.2,375.3 312.2,382.6 314.5,376.8 317.4,353.6 318.9,339.0 321.8,337.6 324.7,330.3 326.7,330.3 328.5,349.2 331.9,344.8 334.8,355.0 337.7,360.8 340.7,360.8 343.0,349.2 346.5,363.7 349.9,372.4 352.8,360.8 355.7,375.3 359.5,376.8 362.4,408.7 364.5,420.3 368.2,398.6 371.1,405.8 374.9,379.7 377.8,386.9 381.3,368.1 384.2,372.4 387.1,349.2 390.0,389.8 395.8,392.8 398.7,418.9 401.6,411.6 403.1,418.9 406.0,392.8 408.9,402.9 411.8,423.2 414.7,414.5 417.6,410.2 419.6,426.1 423.4,424.7 426.3,414.5 430.7,404.4 433.6,410.2 436.5,405.8 439.4,400.0 442.3,397.1 445.2,379.7 449.5,371.0 452.9,378.2 453.9,378.2 456.6,368.1 458.7,371.0 461.0,366.6 463.1,381.1 466.0,386.9 468.9,408.7 471.8,414.5 473.2,400.0 475.6,429.0 477.6,424.7 479.6,423.2 481.9,397.1 483.4,386.9 485.4,388.4 487.7,362.3 490.7,347.7 493.6,344.8 496.5,339.0 497.9,337.6 499.4,365.2 501.7,357.9 503.7,368.1 505.2,402.9 507.2,423.2 509.5,404.4 512.4,402.9 515.3,418.9 519.7,433.4 522.6,418.9 526.1,410.2 528.4,420.3 531.3,407.3 534.2,402.9 537.7,385.5 540.6,388.4 543.5,405.8 545.8,416.0 550.2,402.9 553.1,417.4 556.0,439.2 558.9,426.1 561.8,429.0 564.1,421.8 567.0,413.1 569.0,407.3 572.0,418.9 574.9,426.1 577.8,445.0 580.7,442.1 583.6,446.5 586.5,445.0 589.4,455.2 592.3,461.0 595.2,449.4 598.1,440.7 600.4,423.2 602.9,418.7 603.9,417.4 605.8,420.2 608.5,421.0 611.6,439.0 613.1,412.9 616.0,396.9 618.9,407.1 620.3,414.4 623.2,412.9 626.1,404.2 628.2,395.5 629.9,398.4 631.9,396.9 634.8,410.0 637.7,420.2 640.1,427.4 642.1,418.7 645.0,428.9 647.9,411.5 650.8,407.1 653.7,405.7 656.6,412.9 659.5,412.9 662.4,414.4 665.3,408.6 668.2,412.9 671.1,401.3 674.0,405.7 676.1,388.2 678.4,379.5 680.7,370.8 682.8,356.3 685.7,357.7 687.1,382.4 690.0,388.2 692.9,391.1 695.8,385.3 698.7,351.9 701.0,345.6 703.1,359.2 706.0,363.6 708.9,373.7 711.8,394.0 713.2,421.6 716.1,412.9 720.5,411.5 723.4,430.3 727.8,407.1 730.7,412.9 732.1,434.7 735.0,447.8 737.9,462.3 740.8,447.8 743.7,459.4 745.8,479.1 748.1,442.0 749.5,440.5 751.6,431.8" fill="none" stroke="#7e57c2" stroke-opacity="0.9" stroke-width="1" stroke-linejoin="round"/>
<path d="M6.39 394.79C7.74 396.38 11.71 401.80 14.52 404.37C17.32 406.93 20.81 408.96 23.23 410.17C25.65 411.38 26.37 412.11 29.04 411.63C31.70 411.14 36.30 406.79 39.20 407.27C42.10 407.75 44.28 411.63 46.46 414.53C48.64 417.43 49.85 422.76 52.26 424.69C54.68 426.63 58.31 425.42 60.98 426.14C63.64 426.87 65.81 430.02 68.23 429.05C70.65 428.08 72.83 422.27 75.49 420.34C78.16 418.40 81.30 418.40 84.20 417.43C87.11 416.47 90.25 416.71 92.92 414.53C95.58 412.35 98.24 406.40 100.17 404.37C102.11 402.33 100.90 402.58 104.53 402.33C108.16 402.09 117.35 401.27 121.95 402.92C126.55 404.56 129.21 411.48 132.11 412.21C135.02 412.93 136.23 409.30 139.37 407.27C142.52 405.24 147.80 403.64 150.99 400.01C154.17 396.38 155.74 390.82 158.48 385.49C161.22 380.17 164.48 372.91 167.42 368.07C170.36 363.23 173.71 358.97 176.13 356.46C178.55 353.94 179.76 353.55 181.94 352.97C184.12 352.39 186.54 353.94 189.20 352.97C191.86 352.01 195.01 348.38 197.91 347.17C200.81 345.96 203.47 347.07 206.62 345.71C209.77 344.36 213.64 338.94 216.78 339.04C219.93 339.13 222.59 343.88 225.49 346.30C228.40 348.71 231.30 349.92 234.20 353.55C237.11 357.18 240.50 363.72 242.92 368.07C245.33 372.43 246.79 376.78 248.72 379.69C250.66 382.59 252.11 384.43 254.53 385.49C256.95 386.56 259.85 385.59 263.24 386.07C266.63 386.56 270.98 386.32 274.85 388.40C278.73 390.48 283.08 397.59 286.47 398.56C289.86 399.53 292.76 395.17 295.18 394.20C297.60 393.24 298.52 394.93 300.99 392.75C303.46 390.57 306.77 385.01 309.99 381.14C313.21 377.27 317.15 373.64 320.33 369.52C323.50 365.41 325.16 360.18 329.04 356.46C332.91 352.73 339.68 347.17 343.55 347.17C347.43 347.17 349.36 352.97 352.26 356.46C355.17 359.94 357.59 362.99 360.98 368.07C364.36 373.15 368.96 382.98 372.59 386.95C376.22 390.91 378.88 392.37 382.75 391.88C386.62 391.40 391.71 384.38 395.82 384.04C399.93 383.70 404.05 386.70 407.43 389.85C410.82 392.99 413.24 398.80 416.14 402.92C419.05 407.03 421.95 413.08 424.85 414.53C427.76 415.98 431.15 411.87 433.57 411.63C435.99 411.38 436.47 415.01 439.37 413.08C442.28 411.14 447.55 404.51 450.99 400.01C454.42 395.51 457.49 389.46 459.99 386.07C462.49 382.69 463.76 380.03 465.97 379.69C468.18 379.35 470.81 381.62 473.23 384.04C475.65 386.46 478.31 392.03 480.49 394.20C482.67 396.38 484.12 397.59 486.30 397.11C488.47 396.62 491.13 394.45 493.55 391.30C495.97 388.16 498.64 381.62 500.81 378.23C502.99 374.85 504.68 371.94 506.62 370.98C508.56 370.01 510.25 370.01 512.43 372.43C514.61 374.85 517.51 380.65 519.69 385.49C521.86 390.33 523.56 396.14 525.49 401.46C527.43 406.79 528.88 415.74 531.30 417.43C533.72 419.13 536.62 413.80 540.01 411.63C543.40 409.45 547.75 404.37 551.63 404.37C555.50 404.37 559.37 408.72 563.24 411.63C567.11 414.53 570.98 418.16 574.85 421.79C578.73 425.42 582.60 429.53 586.47 433.40C590.34 437.27 595.18 443.08 598.08 445.02C600.99 446.95 601.64 446.01 603.89 445.02C606.15 444.02 608.88 442.95 611.61 439.05C614.35 435.15 617.42 425.98 620.33 421.63C623.23 417.27 625.65 415.09 629.04 412.92C632.42 410.74 637.50 408.56 640.65 408.56C643.80 408.56 645.49 412.43 647.91 412.92C650.33 413.40 652.51 411.08 655.17 411.46C657.83 411.85 660.98 415.48 663.88 415.24C666.78 415.00 669.69 412.09 672.59 410.01C675.49 407.93 678.40 405.90 681.30 402.75C684.20 399.61 687.11 394.53 690.01 391.14C692.92 387.75 695.82 385.81 698.72 382.43C701.63 379.04 704.77 371.05 707.43 370.81C710.09 370.57 711.79 376.86 714.69 380.98C717.60 385.09 721.71 389.69 724.85 395.49C728.00 401.30 730.66 409.77 733.57 415.82C736.47 421.87 739.37 427.43 742.28 431.79C745.18 436.14 749.54 440.26 750.99 441.95" fill="none" stroke="#d6b23a" stroke-width="1"/>
<text x="5.90" y="11.60" font-size="7.9" font-weight="bold" fill="#d9d9d9" textLength="234.70" lengthAdjust="spacingAndGlyphs">nderitumichaelg created with TradingView.com, Feb 08, 2026 19:04 UTC</text>
<text x="10.50" y="27.80" font-size="8.6" font-weight="normal" fill="#c2c2c2" textLength="116.50" lengthAdjust="spacingAndGlyphs">Bitcoin / U.S. Dollar · 1D · Bitstamp</text>
<text x="131.30" y="27.80" font-size="8.6" font-weight="normal" fill="#c2c2c2" textLength="4.60" lengthAdjust="spacingAndGlyphs">O</text>
<text x="136.20" y="27.80" font-size="8.6" font-weight="normal" fill="#12a08a" textLength="22.00" lengthAdjust="spacingAndGlyphs">69,249</text>
<text x="162.50" y="27.80" font-size="8.6" font-weight="normal" fill="#c2c2c2" textLength="4.60" lengthAdjust="spacingAndGlyphs">H</text>
<text x="167.40" y="27.80" font-size="8.6" font-weight="normal" fill="#12a08a" textLength="21.30" lengthAdjust="spacingAndGlyphs">71,494</text>
<text x="193.00" y="27.80" font-size="8.6" font-weight="normal" fill="#c2c2c2" textLength="3.00" lengthAdjust="spacingAndGlyphs">L</text>
<text x="196.30" y="27.80" font-size="8.6" font-weight="normal" fill="#12a08a" textLength="21.90" lengthAdjust="spacingAndGlyphs">68,850</text>
<text x="222.50" y="27.80" font-size="8.6" font-weight="normal" fill="#c2c2c2" textLength="4.30" lengthAdjust="spacingAndGlyphs">C</text>
<text x="227.10" y="27.80" font-size="8.6" font-weight="normal" fill="#12a08a" textLength="21.70" lengthAdjust="spacingAndGlyphs">71,216</text>
<text x="252.70" y="27.80" font-size="8.6" font-weight="normal" fill="#12a08a" textLength="51.50" lengthAdjust="spacingAndGlyphs">+1,970 (+2.84%)</text>
<text x="10.80" y="316.80" font-size="8.3" font-weight="normal" fill="#c2c2c2" stroke="#c2c2c2" stroke-width="0.15" textLength="46.40" lengthAdjust="spacingAndGlyphs">RSI (14, close)</text>
<text x="61.50" y="316.80" font-size="8.3" font-weight="normal" fill="#8a5fd0" stroke="#8a5fd0" stroke-width="0.2" textLength="17.50" lengthAdjust="spacingAndGlyphs">35.28</text>
<text x="83.40" y="316.80" font-size="8.3" font-weight="normal" fill="#e2bd3a" stroke="#e2bd3a" stroke-width="0.2" textLength="17.80" lengthAdjust="spacingAndGlyphs">31.63</text>
<text x="934.80" y="33.90" font-size="7.8" font-weight="normal" fill="#d2d2d2" stroke="#d2d2d2" stroke-width="0.2" textLength="25.09" lengthAdjust="spacingAndGlyphs">130,000</text>
<text x="934.80" y="69.26" font-size="7.8" font-weight="normal" fill="#d2d2d2" stroke="#d2d2d2" stroke-width="0.2" textLength="25.09" lengthAdjust="spacingAndGlyphs">120,000</text>
<text x="934.80" y="104.62" font-size="7.8" font-weight="normal" fill="#d2d2d2" stroke="#d2d2d2" stroke-width="0.2" textLength="25.09" lengthAdjust="spacingAndGlyphs">110,000</text>
<text x="934.80" y="139.98" font-size="7.8" font-weight="normal" fill="#d2d2d2" stroke="#d2d2d2" stroke-width="0.2" textLength="25.09" lengthAdjust="spacingAndGlyphs">100,000</text>
<text x="934.80" y="175.34" font-size="7.8" font-weight="normal" fill="#d2d2d2" stroke="#d2d2d2" stroke-width="0.2" textLength="21.75" lengthAdjust="spacingAndGlyphs">90,000</text>
<text x="934.80" y="210.70" font-size="7.8" font-weight="normal" fill="#d2d2d2" stroke="#d2d2d2" stroke-width="0.2" textLength="21.75" lengthAdjust="spacingAndGlyphs">80,000</text>
<text x="934.80" y="281.42" font-size="7.8" font-weight="normal" fill="#d2d2d2" stroke="#d2d2d2" stroke-width="0.2" textLength="21.75" lengthAdjust="spacingAndGlyphs">60,000</text>
<clipPath id="rax"><rect x="920" y="305" width="50" height="192"/></clipPath><g clip-path="url(#rax)">
<text x="934.60" y="321.50" font-size="7.8" font-weight="normal" fill="#d2d2d2" stroke="#d2d2d2" stroke-width="0.2" textLength="17.90" lengthAdjust="spacingAndGlyphs">80.00</text>
<text x="934.60" y="346.80" font-size="7.8" font-weight="normal" fill="#d2d2d2" stroke="#d2d2d2" stroke-width="0.2" textLength="17.90" lengthAdjust="spacingAndGlyphs">70.00</text>
<text x="934.60" y="372.10" font-size="7.8" font-weight="normal" fill="#d2d2d2" stroke="#d2d2d2" stroke-width="0.2" textLength="17.90" lengthAdjust="spacingAndGlyphs">60.00</text>
<text x="934.60" y="397.40" font-size="7.8" font-weight="normal" fill="#d2d2d2" stroke="#d2d2d2" stroke-width="0.2" textLength="17.90" lengthAdjust="spacingAndGlyphs">50.00</text>
<text x="934.60" y="422.70" font-size="7.8" font-weight="normal" fill="#d2d2d2" stroke="#d2d2d2" stroke-width="0.2" textLength="17.90" lengthAdjust="spacingAndGlyphs">40.00</text>
<text x="934.60" y="473.30" font-size="7.8" font-weight="normal" fill="#d2d2d2" stroke="#d2d2d2" stroke-width="0.2" textLength="17.90" lengthAdjust="spacingAndGlyphs">20.00</text>
<text x="934.60" y="499.60" font-size="7.8" font-weight="normal" fill="#d2d2d2" stroke="#d2d2d2" stroke-width="0.2" textLength="17.90" lengthAdjust="spacingAndGlyphs">10.00</text>
</g>
<text x="45.80" y="509.00" font-size="7.5" font-weight="normal" fill="#d2d2d2" textLength="11.80" lengthAdjust="spacingAndGlyphs">Mar</text>
<text x="108.60" y="509.00" font-size="7.5" font-weight="normal" fill="#d2d2d2" textLength="11.80" lengthAdjust="spacingAndGlyphs">Apr</text>
<text x="169.70" y="509.00" font-size="7.5" font-weight="normal" fill="#d2d2d2" textLength="11.80" lengthAdjust="spacingAndGlyphs">May</text>
<text x="232.90" y="509.00" font-size="7.5" font-weight="normal" fill="#d2d2d2" textLength="11.80" lengthAdjust="spacingAndGlyphs">Jun</text>
<text x="294.70" y="509.00" font-size="7.5" font-weight="normal" fill="#d2d2d2" textLength="11.80" lengthAdjust="spacingAndGlyphs">Jul</text>
<text x="357.20" y="509.00" font-size="7.5" font-weight="normal" fill="#d2d2d2" textLength="11.80" lengthAdjust="spacingAndGlyphs">Aug</text>
<text x="420.40" y="509.00" font-size="7.5" font-weight="normal" fill="#d2d2d2" textLength="11.80" lengthAdjust="spacingAndGlyphs">Sep</text>
<text x="481.60" y="509.00" font-size="7.5" font-weight="normal" fill="#d2d2d2" textLength="11.80" lengthAdjust="spacingAndGlyphs">Oct</text>
<text x="544.20" y="509.00" font-size="7.5" font-weight="normal" fill="#d2d2d2" textLength="11.80" lengthAdjust="spacingAndGlyphs">Nov</text>
<text x="606.20" y="509.00" font-size="7.5" font-weight="normal" fill="#d2d2d2" textLength="11.80" lengthAdjust="spacingAndGlyphs">Dec</text>
<text x="666.80" y="509.00" font-size="7.5" font-weight="bold" fill="#d2d2d2" textLength="17.00" lengthAdjust="spacingAndGlyphs">2026</text>
<text x="731.80" y="509.00" font-size="7.5" font-weight="normal" fill="#d2d2d2" textLength="11.80" lengthAdjust="spacingAndGlyphs">Feb</text>
<text x="789.20" y="509.00" font-size="7.5" font-weight="normal" fill="#d2d2d2" textLength="11.80" lengthAdjust="spacingAndGlyphs">Mar</text>
<text x="852.60" y="509.00" font-size="7.5" font-weight="normal" fill="#d2d2d2" textLength="11.80" lengthAdjust="spacingAndGlyphs">Apr</text>
<text x="913.50" y="509.00" font-size="7.5" font-weight="normal" fill="#d2d2d2" textLength="11.80" lengthAdjust="spacingAndGlyphs">May</text>
<rect x="929.9" y="235.9" width="36.1" height="18.3" fill="#089981"/>
<text x="934.80" y="242.80" font-size="7.3" font-weight="bold" fill="#ffffff" textLength="21.30" lengthAdjust="spacingAndGlyphs">71,216</text>
<text x="934.80" y="251.80" font-size="7.3" font-weight="normal" fill="#e8f5f2" textLength="28.10" lengthAdjust="spacingAndGlyphs">04:55:50</text>
<rect x="929.8" y="427.9" width="26.1" height="9.7" fill="#7e57c2"/>
<text x="934.50" y="435.40" font-size="7.5" font-weight="normal" fill="#ffffff" textLength="17.80" lengthAdjust="spacingAndGlyphs">35.28</text>
<rect x="929.8" y="437.6" width="26.1" height="11.1" fill="#f2d416"/>
<text x="934.50" y="446.00" font-size="7.5" font-weight="normal" fill="#1a1a1a" textLength="17.80" lengthAdjust="spacingAndGlyphs">31.63</text>
<rect x="749.6" y="289.8" width="19.2" height="13.6" rx="6.8" fill="#d8303f"/>
<path d="M760.5 291.2a6.2 6.2 0 0 1 0 10.8 M762.5 291.2a6.2 6.2 0 0 1 0 10.8 M764.5 291.2a6.2 6.2 0 0 1 0 10.8 M766.5 291.5a6 6 0 0 1 0 10.2" stroke="#6e1119" stroke-width="0.6" fill="none"/>
<circle cx="756.1" cy="296.5" r="5.6" fill="#2a0508"/>
<clipPath id="flag"><circle cx="756.1" cy="296.5" r="4.7"/></clipPath>
<g clip-path="url(#flag)"><rect x="750" y="290" width="13" height="13" fill="#f2f2f2"/><rect x="750" y="290" width="6.1" height="7.2" fill="#4a9be8"/><path d="M756.1 292.6h6M756.1 295.3h6M750 299.6h12.5M750 302.2h12.5" stroke="#e84048" stroke-width="1.2"/></g>
<path d="M751.8 290.6a7.4 7.4 0 0 0 -4.6 4.2 M748.6 301a7.4 7.4 0 0 0 3.8 2.4" stroke="#9140d0" stroke-width="1.1" fill="none"/>
<path d="M745.8 295.9q0.5 2.4 2.7 2.9q-2.2 0.5 -2.7 2.9q-0.5 -2.4 -2.7 -2.9q2.2 -0.5 2.7 -2.9z" fill="#9150e8"/>
<path d="M7.1 528h7.1v8.9h-3.5v-5.3h-3.6z" fill="#eaeaea"/>
<circle cx="17.4" cy="529.5" r="1.55" fill="#eaeaea"/>
<path d="M21.1 528h4l-3.3 8.9h-4z" fill="#eaeaea"/>
<text x="30.20" y="537.20" font-size="12.2" font-weight="bold" fill="#ebebeb" textLength="72.00" lengthAdjust="spacingAndGlyphs">TradingView</text>
</svg>
</body></html>
